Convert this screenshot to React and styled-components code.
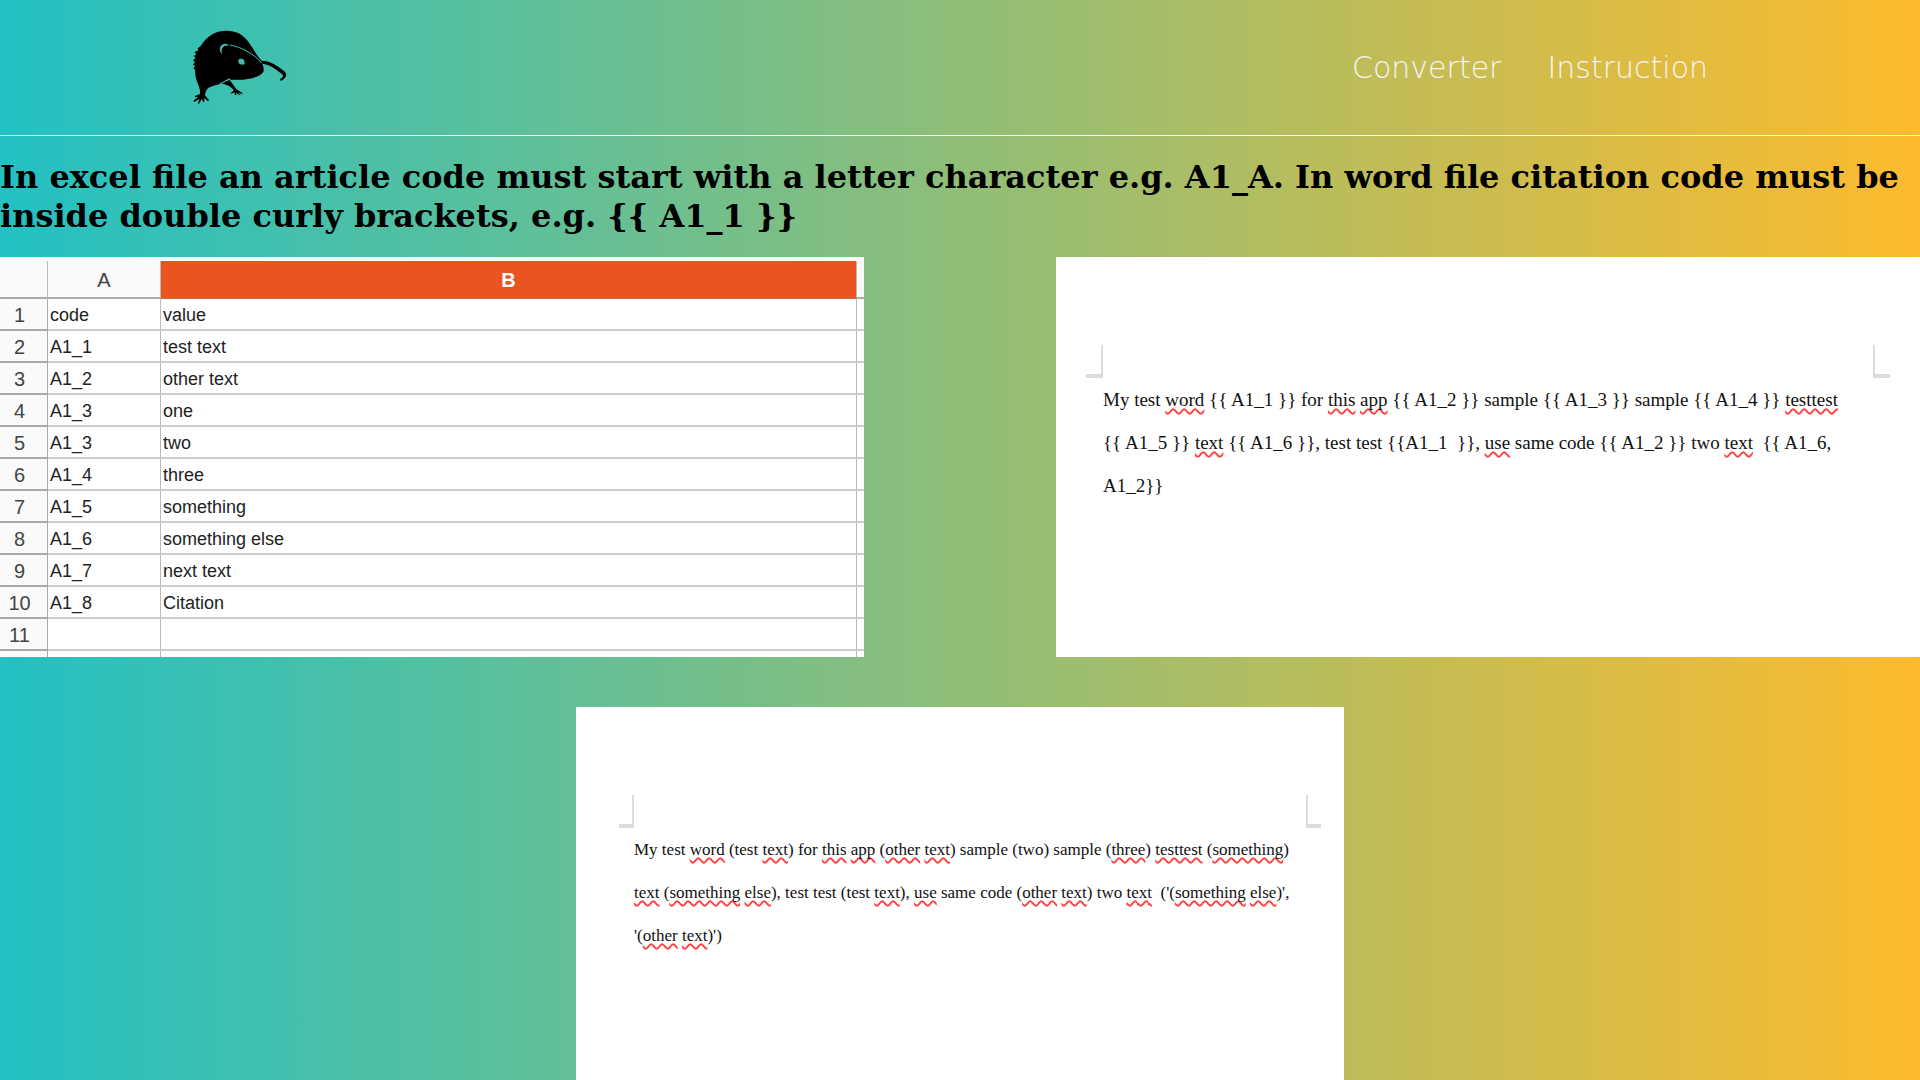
import React from "react";
import styled, { createGlobalStyle } from "styled-components";

const GlobalStyle = createGlobalStyle`
  * { box-sizing: border-box; }
  body {
    margin: 0;
    min-height: 100vh;
    background: linear-gradient(90deg, #22c1c3 0%, #fdbb2d 100%);
    font-family: "DejaVu Serif", serif;
    color: #000;
  }
`;

const Header = styled.header`
  display: flex;
  align-items: center;
  justify-content: space-between;
  padding: 30px 10%;
  border-bottom: 1px solid #f5f5f5;
`;

const HomeLink = styled.a`
  display: block;
  color: #000;
`;

const LogoArt = styled.svg`
  display: block;
  width: 96px;
  height: 75px;
`;

const Nav = styled.nav`
  display: flex;
  gap: 46px;
  padding-right: 20px;
`;

const NavLink = styled.a`
  font-family: "DejaVu Sans Light", "DejaVu Sans", sans-serif;
  font-size: 30px;
  font-weight: 200;
  line-height: 36px;
  color: #f5f5f5;
  text-decoration: none;
`;

const Notice = styled.h1`
  margin: 22px 0 21px;
  font-size: 32px;
  line-height: 39px;
  font-weight: 700;
`;

const Examples = styled.section`
  display: flex;
  flex-wrap: wrap;
  align-items: flex-start;
  justify-content: space-between;
`;

const ResultRow = styled.section`
  display: flex;
  justify-content: center;
  padding-top: 50px;
`;

const SheetFrame = styled.div`
  width: 45%;
  background: #fff;
  border-top: 4px solid #fafafa;
`;

const Sheet = styled.table`
  width: 100%;
  table-layout: fixed;
  border-collapse: separate;
  border-spacing: 0;
  font-family: "Liberation Sans", sans-serif;
  font-size: 18px;
  line-height: 28px;
  color: #222;
`;

const Col = styled.col`
  width: ${(p) => p.$width};
`;

const ColumnHead = styled.th`
  height: 38px;
  padding: 2px 0 0;
  border-right: 1px solid #bbb;
  border-bottom: 2px solid ${(p) => (p.$selected ? "#d4612f" : "#aaa")};
  background: ${(p) => (p.$selected ? "#e95420" : "#fafafa")};
  color: ${(p) => (p.$selected ? "#fff" : "#444")};
  font-size: 20px;
  font-weight: ${(p) => (p.$selected ? 700 : 400)};
  &:last-child { border-right: 0; }
`;

const RowHead = styled.th`
  height: ${(p) => (p.$stub ? "6px" : "32px")};
  padding: ${(p) => (p.$stub ? 0 : "2px 8px 0 0")};
  border-right: 1px solid #aaa;
  border-bottom: ${(p) => (p.$stub ? 0 : "2px solid #aaa")};
  background: #fafafa;
  color: #444;
  font-size: 20px;
  font-weight: 400;
`;

const Cell = styled.td`
  padding: ${(p) => (p.$stub ? 0 : "2px 0 0 2px")};
  border-right: 1px solid #bbb;
  border-bottom: ${(p) => (p.$stub ? 0 : "2px solid #ccc")};
  white-space: nowrap;
  &:last-child { border-right: 0; }
`;

const Page = styled.article`
  width: ${(p) => p.$width};
  min-height: 400px;
  padding: ${(p) => p.$padding};
  background: #fff;
`;

const Marks = styled.div`
  display: flex;
  justify-content: space-between;
`;

const Mark = styled.span`
  width: ${(p) => p.$width};
  height: 33px;
  border: 0 solid #dcdcdc;
  border-bottom-width: 4px;
  ${(p) => (p.$side === "left" ? "border-right-width: 2px;" : "border-left-width: 2px;")}
`;

const Body = styled.p`
  margin: 0;
  padding-left: ${(p) => p.$indent};
  font-family: "Liberation Serif", serif;
  font-size: ${(p) => p.$size};
  line-height: 43px;
  color: #111;
`;

const Line = styled.span`
  display: block;
  white-space: pre;
`;

const Misspelt = styled.span`
  text-decoration: underline wavy #ff4040 2px;
  text-underline-offset: 2px;
  text-decoration-skip-ink: none;
`;

const rows = [
  ["code", "value"],
  ["A1_1", "test text"],
  ["A1_2", "other text"],
  ["A1_3", "one"],
  ["A1_3", "two"],
  ["A1_4", "three"],
  ["A1_5", "something"],
  ["A1_6", "something else"],
  ["A1_7", "next text"],
  ["A1_8", "Citation"],
  ["", ""],
];

// Words between asterisks carry the spell checker's underline.
const templateLines = [
  "My test *word* {{ A1_1 }} for *this* *app* {{ A1_2 }} sample {{ A1_3 }} sample {{ A1_4 }} *testtest*",
  "{{ A1_5 }} *text* {{ A1_6 }}, test test {{A1_1  }}, *use* same code {{ A1_2 }} two *text*  {{ A1_6,",
  "A1_2}}",
];

const resultLines = [
  "My test *word* (test *text*) for *this* *app* (*other* *text*) sample (two) sample (*three*) *testtest* (*something*)",
  "*text* (*something* *else*), test test (test *text*), *use* same code (*other* *text*) two *text*  ('(*something* *else*)',",
  "'(*other* *text*)')",
];

function Logo() {
  return (
    <LogoArt viewBox="36 30 288 225" role="img" aria-label="Home">
      <path
        fill="currentColor"
        d="M62 78 C80 48 108 31 140 32 C172 33 190 45 204 64 C218 84 230 106 245 122 C264 122 286 132 304 147 C314 154 321 160 318 168 C315 176 308 182 302 182 C298 180 300 176 306 173 C311 169 309 164 303 160 C286 146 267 133 247 131 C250 138 252 145 251 153 C246 166 226 173 204 177 C188 180 170 180 153 179 L147 176 L122 191 C108 196 92 198 84 205 C78 211 75 219 75 226 L87 241 L84 244 L73 234 L73 246 L69 246 L66 236 L57 251 L53 251 L59 236 L43 246 L40 242 L55 230 L46 232 L44 228 L60 222 C61 211 58 203 55 195 C48 181 45 164 45 148 L40 147 L45 137 L39 134 L45 126 L39 121 L47 114 L41 108 L49 103 L44 96 L55 91 L53 85 Z"
      />
      <path
        fill="currentColor"
        d="M149 180 C155 187 162 197 169 208 L187 219 L187 223 L174 217 L182 226 L178 225 L169 218 L169 226 L165 225 L163 217 L155 221 L153 218 L162 211 C155 202 145 195 124 190 Z"
      />
      <path
        fill="#40bdb0"
        d="M127 103 C116 94 117 76 131 72 C138 70 145 73 148 78 C140 75 131 77 127 84 C124 90 125 97 127 103 Z"
      />
      <g fill="none" stroke="#40bdb0">
        <path strokeWidth="3" d="M150 75 C184 81 221 101 245 129" />
        <path strokeWidth="3" d="M119 192 L149 176" />
      </g>
      <path fill="#40bdb0" d="M175 121 C179 115 189 115 193 122 L194 132 C188 136 180 134 176 129 Z" />
    </LogoArt>
  );
}

function SpellChecked({ lines }) {
  return lines.map((line) => (
    <Line key={line}>
      {line.split("*").map((part, i) => (i % 2 ? <Misspelt key={i}>{part}</Misspelt> : part))}
    </Line>
  ));
}

function DocumentPage({ width, padding, indent, size, lines }) {
  return (
    <Page $width={width} $padding={padding}>
      <Marks aria-hidden="true">
        <Mark $side="left" $width={indent} />
        <Mark $side="right" $width={indent} />
      </Marks>
      <Body $indent={indent} $size={size}>
        <SpellChecked lines={lines} />
      </Body>
    </Page>
  );
}

function Spreadsheet() {
  return (
    <SheetFrame>
      <Sheet>
        <colgroup>
          <Col $width="48px" />
          <Col $width="113px" />
          <Col />
          <Col $width="7px" />
        </colgroup>
        <thead>
          <tr>
            <ColumnHead />
            <ColumnHead scope="col">A</ColumnHead>
            <ColumnHead scope="col" $selected>B</ColumnHead>
            <ColumnHead />
          </tr>
        </thead>
        <tbody>
          {rows.map(([code, value], i) => (
            <tr key={i}>
              <RowHead scope="row">{i + 1}</RowHead>
              <Cell>{code}</Cell>
              <Cell>{value}</Cell>
              <Cell />
            </tr>
          ))}
          <tr>
            <RowHead $stub />
            <Cell $stub />
            <Cell $stub />
            <Cell $stub />
          </tr>
        </tbody>
      </Sheet>
    </SheetFrame>
  );
}

export default function App() {
  return (
    <>
      <GlobalStyle />
      <Header>
        <HomeLink href="#home"><Logo /></HomeLink>
        <Nav>
          <NavLink href="#converter">Converter</NavLink>
          <NavLink href="#instruction">Instruction</NavLink>
        </Nav>
      </Header>
      <main>
        <Notice>
          In excel file an article code must start with a letter character e.g. A1_A. In word file
          citation code must be inside double curly brackets, e.g. {"{{ A1_1 }}"}
        </Notice>
        <Examples>
          <Spreadsheet />
          <DocumentPage width="45%" padding="88px 30px 0" indent="17px" size="19px" lines={templateLines} />
        </Examples>
        <ResultRow>
          <DocumentPage width="40%" padding="88px 23px 0 43px" indent="15px" size="17px" lines={resultLines} />
        </ResultRow>
      </main>
    </>
  );
}
